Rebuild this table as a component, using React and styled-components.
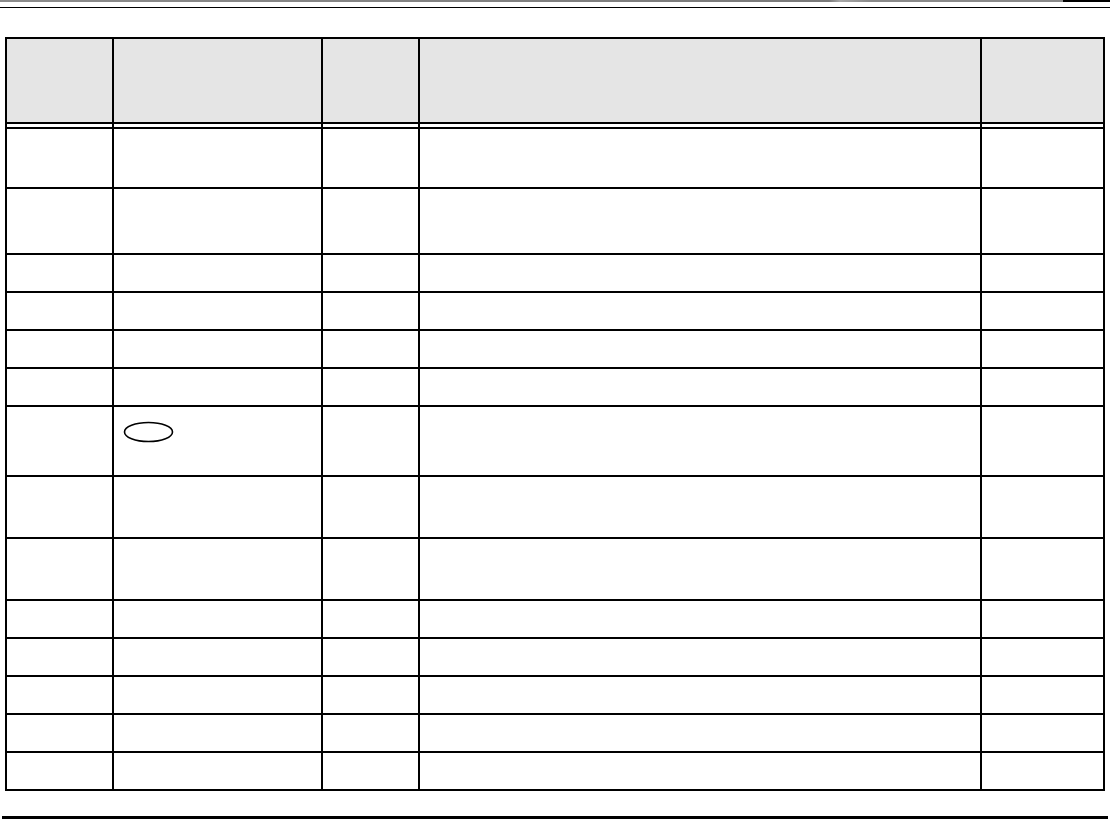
import React from "react";
import styled, { createGlobalStyle } from "styled-components";

const Global = createGlobalStyle`
  html, body { margin: 0; padding: 0; background: #fff; }
  body { font-family: "Liberation Sans", Arial, sans-serif; }
`;

const Page = styled.div`
  width: 1110px;
  height: 819px;
  display: flex;
  flex-direction: column;
  overflow: hidden;
`;

const TopStrip = styled.div`
  height: 2px;
  display: flex;
`;

const StripGray = styled.div`
  flex: 1;
  background: linear-gradient(to right, #8c8c8c, #7a7a7a 78%, #a8a8a8 79%, #8a8a8a 82%);
`;

const StripBlack = styled.div`
  width: 47px;
  background: #000;
`;

const Rule = styled.div`
  height: ${(p) => p.$h}px;
  margin: ${(p) => p.$m};
  background: #000;
`;

const Table = styled.div`
  margin: 29px 0 0 5px;
  width: max-content;
  display: grid;
  grid-template-columns: 105px 207px 95px 560px 121px;
  grid-auto-rows: ${(p) => p.$rows};
  gap: 2px;
  padding: 2px;
  background: #000;
`;

const Cell = styled.div`
  background: ${(p) => (p.$head ? "#e5e5e5" : "#fff")};
  box-sizing: border-box;
  padding: ${(p) => p.$pad || "0"};
`;

const widths = [105, 207, 95, 560, 121];
const rowHeights = [83, 3, 58, 64, 36, 36, 36, 36, 68, 60, 60, 36, 36, 36, 36, 36];

function Oval() {
  return (
    <svg width="51" height="22" viewBox="0 0 51 22">
      <ellipse cx="25.5" cy="11" rx="24" ry="9.5" fill="none" stroke="#000" strokeWidth="1.6" />
    </svg>
  );
}

export default function App() {
  return (
    <>
      <Global />
      <Page>
        <TopStrip>
          <StripGray />
          <StripBlack />
        </TopStrip>
        <Rule $h={1} $m="5px 0 0 0" />
        <Table $rows={rowHeights.map((h) => `${h}px`).join(" ")}>
          {rowHeights.map((h, r) =>
            widths.map((w, c) => {
              const oval = r === 8 && c === 1;
              return (
                <Cell key={`${r}-${c}`} $head={r === 0} $pad={oval ? "14px 0 0 9px" : undefined}>
                  {oval && <Oval />}
                </Cell>
              );
            })
          )}
        </Table>
        <Rule $h={3} $m="25px 2px 0 2px" />
      </Page>
    </>
  );
}
